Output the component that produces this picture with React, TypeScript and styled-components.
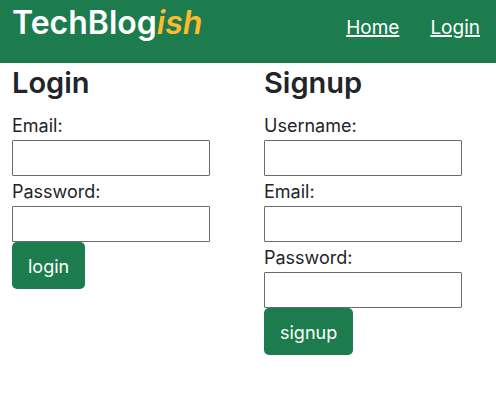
import React from 'react';
import styled, { createGlobalStyle } from 'styled-components';

const GlobalStyle = createGlobalStyle`
  *, *::before, *::after { box-sizing: border-box; }
  body {
    margin: 0;
    background: #fff;
    color: #212529;
    font-family: Inter, "Liberation Sans", sans-serif;
    font-size: 18px;
    line-height: 28px;
  }
`;

const Header = styled.header`
  display: flex;
  justify-content: space-between;
  background: #1c7c4d;
  color: #fff;
  padding: 3px 16px 20px 12px;
`;

const Brand = styled.h1`
  margin: 0;
  font-size: 32px;
  font-weight: 600;
  line-height: 40px;
`;

const Accent = styled.em`
  color: #fdbb2d;
`;

const Nav = styled.nav`
  display: flex;
  gap: 31px;
  padding-top: 11px;
  font-size: 19px;
`;

const NavLink = styled.a`
  color: #fff;
  text-decoration: underline;
  text-decoration-thickness: 2px;
  text-underline-offset: 1px;
`;

const Columns = styled.main`
  display: grid;
  grid-template-columns: 1fr 1fr;
  column-gap: 24px;
  padding: 0 4px 0 12px;
`;

const Form = styled.form`
  display: flex;
  flex-direction: column;
  align-items: flex-start;
`;

const Title = styled.h2`
  margin: 0 0 8px;
  font-size: 29px;
  font-weight: 600;
  line-height: 39px;
`;

const Field = styled.label`
  display: block;
  padding-top: 2px;
`;

const Input = styled.input`
  display: block;
  width: 198px;
  height: 36px;
  padding: 2px 4px;
  border: 1px solid #6b6b6b;
  border-radius: 1px;
  background: #fff;
  font: inherit;
`;

const Button = styled.button`
  padding: 11px 16px 8px;
  border: 0;
  border-radius: 5px;
  background: #1c7c4d;
  color: #fff;
  font: inherit;
  cursor: pointer;
`;

type FieldSpec = { label: string; type: string };

function AuthForm({ title, action, fields }: { title: string; action: string; fields: FieldSpec[] }) {
  return (
    <Form onSubmit={(e) => e.preventDefault()}>
      <Title>{title}</Title>
      {fields.map((f) => {
        const id = `${action}-${f.label.toLowerCase()}`;
        return (
          <React.Fragment key={id}>
            <Field htmlFor={id}>{f.label}:</Field>
            <Input id={id} type={f.type} />
          </React.Fragment>
        );
      })}
      <Button type="submit">{action}</Button>
    </Form>
  );
}

const email = { label: 'Email', type: 'email' };
const password = { label: 'Password', type: 'password' };

export default function App() {
  return (
    <>
      <GlobalStyle />
      <Header>
        <Brand>TechBlog<Accent>ish</Accent></Brand>
        <Nav>
          <NavLink href="#home">Home</NavLink>
          <NavLink href="#login">Login</NavLink>
        </Nav>
      </Header>
      <Columns>
        <AuthForm title="Login" action="login" fields={[email, password]} />
        <AuthForm title="Signup" action="signup" fields={[{ label: 'Username', type: 'text' }, email, password]} />
      </Columns>
    </>
  );
}
